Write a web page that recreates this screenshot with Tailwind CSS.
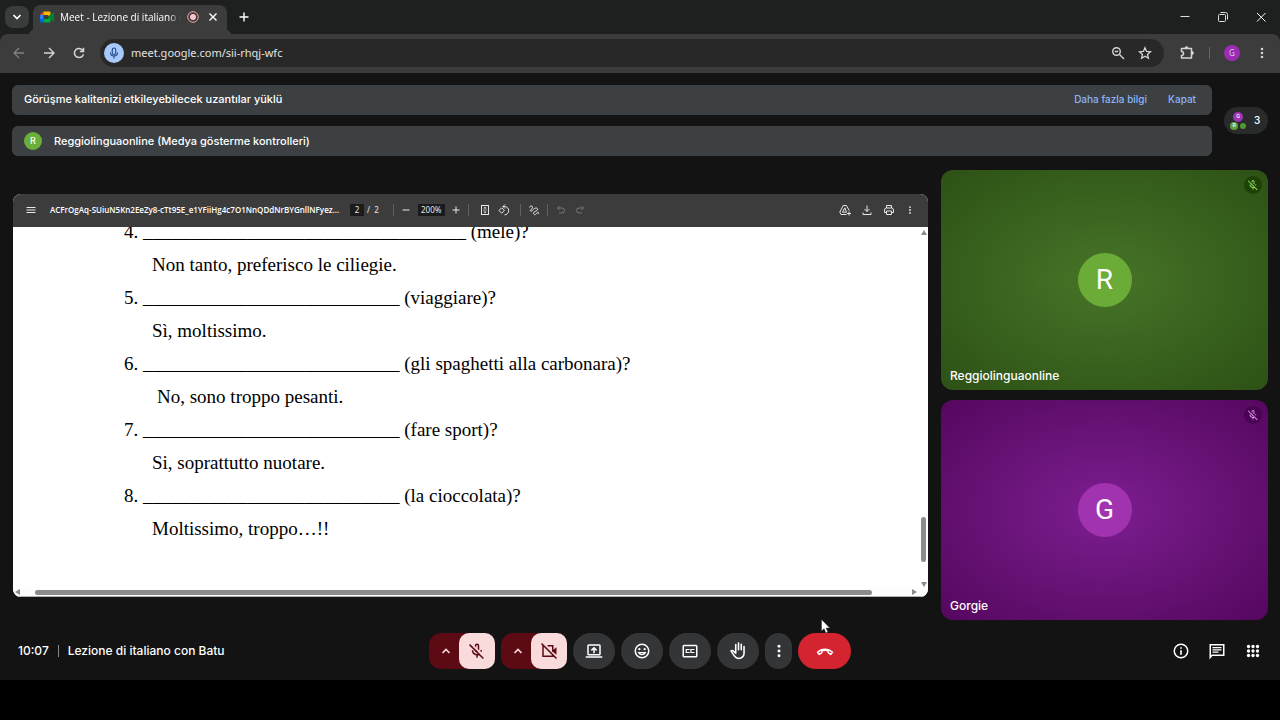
<!DOCTYPE html>
<html lang="tr">

<head>
    <meta charset="UTF-8">
    <meta name="viewport" content="width=device-width, initial-scale=1.0">
    <title>Meet - Lezione di italiano con Batu</title>
    <script src="https://cdn.jsdelivr.net/npm/@tailwindcss/browser@4"></script>
</head>

<body class="flex min-h-screen flex-col bg-black pb-10 font-['Inter',sans-serif] text-white">
    <!-- Shared icons -->
    <svg class="hidden" aria-hidden="true">
        <symbol id="mic-off" viewBox="0 0 24 24">
            <path d="M17.7 13.5 16.3 12c.2-.4.3-.9.4-1.5h1.9c-.1 1.1-.4 2.1-.9 3zM14.6 11 9 5.3V5a3 3 0 0 1 6 0v5.2zM11 5v2.2l2 2V5a1 1 0 0 0-2 0zm0 16v-3.1a7 7 0 0 1-6-6.9h2a5 5 0 0 0 8 4l1.4 1.4a7 7 0 0 1-3.4 1.5V21zm8.8 1.6L1.4 4.2l1.4-1.4 18.4 18.4zM9 8.5l4.8 4.9A3 3 0 0 1 9 11z" />
        </symbol>
        <symbol id="dots" viewBox="0 0 24 24">
            <circle cx="12" cy="5" r="2.2" />
            <circle cx="12" cy="12" r="2.2" />
            <circle cx="12" cy="19" r="2.2" />
        </symbol>
        <symbol id="close" viewBox="0 0 12 12">
            <path d="m2.5 2.5 7 7m0-7-7 7" fill="none" stroke="currentColor" stroke-width="1.4" />
        </symbol>
        <symbol id="chevron-up" viewBox="0 0 12 12">
            <path d="M2.5 8 6 4.5 9.5 8" fill="none" stroke="currentColor" stroke-width="1.7" />
        </symbol>
    </svg>

    <!-- Browser window -->
    <header class="bg-[#1e201f] font-['Noto_Sans',sans-serif]">
        <div class="flex h-[34px] items-center">
            <button class="ml-[5px] grid h-[22px] w-6 place-items-center rounded-lg bg-[#3a3b3b]" aria-label="Sekmelerde ara">
                <svg class="size-3 rotate-180"><use href="#chevron-up" /></svg>
            </button>
            <div class="relative ml-1 flex h-[29px] w-[194px] items-center self-end rounded-t-lg bg-[#3c3c3c] pb-1.5 pl-[7px] before:absolute before:bottom-0 before:-left-2 before:size-2 before:rounded-br-lg before:shadow-[4px_4px_0_0_#3c3c3c] after:absolute after:-right-2 after:bottom-0 after:size-2 after:rounded-bl-lg after:shadow-[-4px_4px_0_0_#3c3c3c]">
                <svg class="h-3 w-3.5" viewBox="0 0 28 24">
                    <path d="M7 1v7H0z" fill="#ea4335" />
                    <path d="M0 8h7v8H0z" fill="#2684fc" />
                    <path d="M0 16h7v7H2q-2 0-2-2z" fill="#0066da" />
                    <path d="M7 1h12q2 0 2 2v9l-6-4H7z" fill="#ffba00" />
                    <path d="M7 16h8l6-4v9q0 2-2 2H7z" fill="#00ac47" />
                    <path d="m15 12 11-9q2-1 2 1v16q0 2-2 1z" fill="#00832d" />
                </svg>
                <span class="ml-1.5 w-[121px] overflow-hidden mask-r-from-90% font-['Open_Sans',sans-serif] text-[10px] leading-4 whitespace-nowrap">Meet - Lezione di italiano con Batu</span>
                <svg class="ml-1.5 size-3 text-[#f2a3a8]" viewBox="0 0 12 12" fill="none" stroke="currentColor">
                    <circle cx="6" cy="6" r="5.3" />
                    <circle cx="6" cy="6" r="3" fill="#f9c6c9" stroke="none" />
                </svg>
                <button class="ml-2 text-white" aria-label="Sekmeyi kapat"><svg class="size-3"><use href="#close" /></svg></button>
            </div>
            <button class="ml-[11px]" aria-label="Yeni sekme">
                <svg class="size-3" viewBox="0 0 12 12" stroke="white" stroke-width="1.4"><path d="M6 1.5v9M1.5 6h9" /></svg>
            </button>
            <div class="ml-auto flex items-center gap-[26px] pr-[13px]">
                <button aria-label="Simge durumuna küçült">
                    <svg class="size-3" viewBox="0 0 12 12" stroke="#ddd"><path d="M1.5 5.5h9" /></svg>
                </button>
                <button aria-label="Önceki boyut">
                    <svg class="size-3" viewBox="0 0 12 12" fill="none" stroke="#ddd">
                        <rect x="1.5" y="3.5" width="7" height="7" rx="1" />
                        <path d="M3.5 1.5h5a2 2 0 0 1 2 2v5" />
                    </svg>
                </button>
                <button aria-label="Kapat"><svg class="size-3" viewBox="0 0 12 12" stroke="white"><path d="m2 2 8.500 8.500M10.500 2 2 10.500" /></svg></button>
            </div>
        </div>

        <div class="flex h-[39px] items-center rounded-t-lg bg-[#3c3c3c] pr-[11px] pb-px pl-3 text-[#d5d5d5]">
            <button class="text-[#818181]" aria-label="Geri">
                <svg class="size-3.5" viewBox="0 0 14 14" fill="none" stroke="currentColor" stroke-width="1.3"><path d="M12 7H2m5-5L2 7l5 5" /></svg>
            </button>
            <button class="ml-4" aria-label="İleri">
                <svg class="size-3.5" viewBox="0 0 14 14" fill="none" stroke="currentColor" stroke-width="1.4"><path d="M2 7h10M7 2l5 5-5 5" /></svg>
            </button>
            <button class="ml-4" aria-label="Yenile">
                <svg class="size-3.5" viewBox="0 0 24 24" fill="currentColor"><path d="M12 21a9 9 0 1 1 6.300-15.400V3H21v7.500h-7.500V8h3.600A6.500 6.500 0 1 0 18.200 14h2.600A9 9 0 0 1 12 21z" /></svg>
            </button>
            <form class="ml-3.5 flex h-7 flex-1 items-center rounded-full bg-[#282828] pr-3 pl-1">
                <button type="button" class="grid size-5 place-items-center rounded-full bg-[#a8c7fa] text-[#1d4a86]" aria-label="Mikrofon kullanılıyor">
                    <svg class="size-3" viewBox="0 0 24 24" fill="none" stroke="currentColor" stroke-width="2.2">
                        <rect x="8.5" y="2" width="7" height="13" rx="3.5" />
                        <path d="M5 11a7 7 0 0 0 14 0M12 18v5" />
                    </svg>
                </button>
                <input type="text" value="meet.google.com/sii-rhqj-wfc" aria-label="Adres çubuğu" class="ml-[7px] min-w-0 flex-1 bg-transparent text-[11px] text-[#e3e3e3] outline-none">
                <button type="button" aria-label="Yakınlaştır">
                    <svg class="size-3.5" viewBox="0 0 14 14" fill="none" stroke="currentColor" stroke-width="1.4">
                        <circle cx="5.5" cy="5.5" r="3.8" />
                        <path d="m8.500 8.500 4.500 4.500M3.800 5.500h3.400" />
                    </svg>
                </button>
                <button type="button" class="ml-[13px]" aria-label="Yer işareti ekle">
                    <svg class="size-3.5" viewBox="0 0 24 24" fill="none" stroke="currentColor" stroke-width="2.2"><path d="m12 3 2.700 6.300 6.800.6-5.200 4.500 1.600 6.600-5.900-3.500L6.100 21l1.600-6.600-5.200-4.500 6.800-.6z" /></svg>
                </button>
            </form>
            <button class="ml-[15px]" aria-label="Uzantılar">
                <svg class="size-4" viewBox="0 0 16 16" fill="none" stroke="currentColor" stroke-width="1.5">
                    <path d="M2.500 3.500h10v9.500h-10v-2.500a2 2 0 0 0 0-4z" stroke-linejoin="round" />
                    <path d="M6 3a1.500 1.500 0 0 1 3 0zM13 6.500a1.500 1.500 0 0 1 0 3z" fill="currentColor" stroke-width=".7" />
                </svg>
            </button>
            <span class="mx-3.5 h-3 w-px bg-[#666]"></span>
            <button class="grid size-4 place-items-center rounded-full bg-[#9c2bb5] text-[8px]" aria-label="Profil">G</button>
            <button class="ml-[15px]" aria-label="Menü"><svg class="size-3.5 fill-current"><use href="#dots" /></svg></button>
        </div>
    </header>

    <main class="flex flex-1 flex-col bg-[#131313]">
        <!-- Notices -->
        <section class="flex items-center gap-3 px-3 pt-3 text-[11px] font-medium">
            <div class="flex flex-1 flex-col gap-[11px]">
                <div class="flex h-[30px] items-center rounded-md bg-[#3c4043] px-3 pb-px">
                    <p>Görüşme kalitenizi etkileyebilecek uzantılar yüklü</p>
                    <a href="#" class="ml-auto text-[10px] text-[#8ab4f8]">Daha fazla bilgi</a>
                    <button class="mr-1 ml-[21px] text-[10px] text-[#8ab4f8]">Kapat</button>
                </div>
                <div class="flex h-[30px] items-center rounded-md bg-[#3c4043] px-3">
                    <span class="grid size-[18px] place-items-center rounded-full bg-[#6aaf38] text-[9px]">R</span>
                    <p class="ml-3">Reggiolinguaonline (Medya gösterme kontrolleri)</p>
                </div>
            </div>
            <button class="flex h-[27px] w-11 items-center rounded-full bg-[#282a2c] pl-[5px]" aria-label="3 katılımcı">
                <span class="flex w-[18px] flex-wrap justify-center gap-x-0.5 text-[5px] leading-none">
                    <span class="mx-1 grid size-2.5 place-items-center rounded-full bg-[#a033b8]">G</span>
                    <span class="grid size-2 place-items-center rounded-full bg-[#5fa03a]">R</span>
                    <span class="mt-px grid size-1.5 place-items-center rounded-full bg-[#4f9a30]"></span>
                </span>
                <span class="ml-[7px] text-[10px]">3</span>
            </button>
        </section>

        <!-- Shared screen and participants -->
        <section class="flex flex-1 items-center gap-[13px] pt-3.5 pr-3 pl-[13px]">
            <article class="flex aspect-[915/403] min-w-0 flex-1 flex-col overflow-hidden rounded-lg bg-white">
                <div class="flex h-[33px] shrink-0 items-center bg-[#3c3c3c] px-[13px] font-['Noto_Sans',sans-serif] text-[8px] text-[#e8e8e8]">
                    <button aria-label="Kenar çubuğu">
                        <svg class="size-2.5" viewBox="0 0 10 10" stroke="currentColor"><path d="M.5 2.500h9M.5 5h9M.5 7.500h9" /></svg>
                    </button>
                    <h1 class="ml-3.5 w-[287px] font-['Open_Sans',sans-serif] font-semibold whitespace-nowrap text-white">ACFrOgAq-SUiuN5Kn2EeZy8-cTt95E_e1YFiiHg4c7O1NnQDdNrBYGnllNFyez...</h1>
                    <input type="text" value="2" aria-label="Sayfa" class="ml-[13px] h-3 w-3.5 bg-[#191b1c] text-center">
                    <span class="ml-[3px]">/&nbsp; 2</span>
                    <span class="ml-3.5 h-3 w-px bg-[#606060]"></span>
                    <button class="ml-[7px]" aria-label="Uzaklaştır">
                        <svg class="size-2.5" viewBox="0 0 10 10" stroke="currentColor"><path d="M1.500 5h7" /></svg>
                    </button>
                    <input type="text" value="200%" aria-label="Yakınlaştırma düzeyi" class="ml-[7px] h-3 w-[27px] bg-[#191b1c] text-center">
                    <button class="ml-1.5" aria-label="Yakınlaştır">
                        <svg class="size-2.5" viewBox="0 0 10 10" stroke="currentColor"><path d="M1.500 5h7M5 1.500v7" /></svg>
                    </button>
                    <span class="ml-[7px] h-3 w-px bg-[#606060]"></span>
                    <button class="ml-2.5" aria-label="Sayfaya sığdır">
                        <svg class="size-3" viewBox="0 0 12 12" fill="none" stroke="currentColor">
                            <rect x="2.5" y="1.5" width="7" height="9" />
                            <path d="M4 6h4" stroke-width=".6" />
                            <path d="m6 2.500 1.500 2h-3zM6 9.500l1.500-2h-3z" fill="currentColor" stroke="none" />
                        </svg>
                    </button>
                    <button class="ml-[7px]" aria-label="Döndür">
                        <svg class="size-3" viewBox="0 0 12 12" fill="none" stroke="currentColor">
                            <path d="M1 6.500 3.700 3.800l2.700 2.700-2.700 2.700zM5 2.500h1.500a4.200 4.200 0 1 1 0 8.400M7 .5l-2 2 2 2" />
                        </svg>
                    </button>
                    <span class="ml-2.5 h-3 w-px bg-[#606060]"></span>
                    <button class="ml-[7px]" aria-label="Çiz">
                        <svg class="size-3" viewBox="0 0 12 12" fill="none" stroke="currentColor">
                            <path d="M1.500 3.500c.5-2 3.500-2 3 0S1.500 6 2.500 7s2.300-1.500 4-2.500 3.500-.5 3 1.200S5 7.500 5.500 9.500s3 1 3.500-.5 2-.5 1.500 1" />
                        </svg>
                    </button>
                    <span class="ml-[7px] h-3 w-px bg-[#606060]"></span>
                    <button class="ml-[7px] text-[#777]" aria-label="Geri al" disabled>
                        <svg class="size-3" viewBox="0 0 12 12" fill="none" stroke="currentColor"><path d="M4.500 2 2.500 4l2 2M2.500 4H7a2.500 2.500 0 0 1 0 5H4" /></svg>
                    </button>
                    <button class="ml-[7px] text-[#777]" aria-label="Yinele" disabled>
                        <svg class="size-3" viewBox="0 0 12 12" fill="none" stroke="currentColor"><path d="m7.500 2 2 2-2 2m2-2H5a2.500 2.500 0 0 0 0 5h3" /></svg>
                    </button>
                    <div class="ml-auto flex items-center gap-2.5">
                        <button aria-label="Drive'a kaydet">
                            <svg class="size-3" viewBox="0 0 12 12" fill="none" stroke="currentColor">
                                <path d="M7.500 10.500H2L.8 8.200 4.200 1.500h3.200l2.800 5M5.800 3.800 3.500 8.200h4zM10 7.500v4M8 9.500h4" />
                            </svg>
                        </button>
                        <button aria-label="İndir">
                            <svg class="size-3" viewBox="0 0 12 12" fill="none" stroke="currentColor"><path d="M6 1.500v6M3.500 5 6 7.500 8.500 5M2 8.500v2h8v-2" /></svg>
                        </button>
                        <button aria-label="Yazdır">
                            <svg class="size-3" viewBox="0 0 12 12" fill="none" stroke="currentColor">
                                <path d="M3.500 4V1.500h5V4M3.500 8.500h-2V6q0-2 2-2h5q2 0 2 2v2.500h-2M3.500 7h5v3.500h-5z" />
                            </svg>
                        </button>
                        <button aria-label="Diğer"><svg class="size-2.5 fill-current"><use href="#dots" /></svg></button>
                    </div>
                </div>

                <div class="flex min-h-0 flex-1">
                    <div class="flex-1 overflow-hidden font-['Liberation_Serif',serif] text-[19px] leading-[33px] whitespace-nowrap text-black">
                        <div class="-mt-3 pl-[111px]">
                            <p>4. __________________________________ (mele)?</p>
                            <p class="pl-7">Non tanto, preferisco le ciliegie.</p>
                            <p>5. ___________________________ (viaggiare)?</p>
                            <p class="pl-7">Sì, moltissimo.</p>
                            <p>6. ___________________________ (gli spaghetti alla carbonara)?</p>
                            <p class="pl-[33px]">No, sono troppo pesanti.</p>
                            <p>7. ___________________________ (fare sport)?</p>
                            <p class="pl-7">Si, soprattutto nuotare.</p>
                            <p>8. ___________________________ (la cioccolata)?</p>
                            <p class="pl-7">Moltissimo, troppo…!!</p>
                        </div>
                    </div>
                    <!-- Vertical scrollbar -->
                    <div class="flex w-[9px] flex-col items-center pt-[3px] pb-0.5">
                        <svg class="h-[5px] w-1.5 fill-[#8b8b8b]" viewBox="0 0 6 5"><path d="m3 0 3 5H0z" /></svg>
                        <span class="mt-auto h-[45px] w-[5px] rounded-full bg-[#8b8b8b]"></span>
                        <svg class="mt-5 h-[5px] w-1.5 fill-[#8b8b8b]" viewBox="0 0 6 5"><path d="m3 5 3-5H0z" /></svg>
                    </div>
                </div>
                <!-- Horizontal scrollbar -->
                <div class="flex h-2 shrink-0 items-center border-b border-[#b0b0b0] bg-[#fcfcfc] pr-[11px] pl-0.5">
                    <svg class="h-1.5 w-[5px] fill-[#8b8b8b]" viewBox="0 0 5 6"><path d="m0 3 5-3v6z" /></svg>
                    <span class="mr-10 ml-[15px] h-[5px] flex-1 rounded-full bg-[#8b8b8b]"></span>
                    <svg class="h-1.5 w-[5px] fill-[#8b8b8b]" viewBox="0 0 5 6"><path d="M5 3 0 0v6z" /></svg>
                </div>
            </article>

            <aside class="flex w-[327px] shrink-0 flex-col gap-2.5 self-stretch text-xs font-medium">
                <figure class="relative grid min-h-40 flex-1 place-items-center rounded-xl bg-radial from-[#477528] to-[#2d5115]">
                    <span class="grid size-[54px] place-items-center rounded-full bg-[#6bab37] font-['Roboto',sans-serif] text-[28px] font-normal">R</span>
                    <span class="absolute top-1.5 right-1.5 grid size-[18px] place-items-center rounded-full bg-[#1e4108] text-[#8fd95c]">
                        <svg class="size-3 fill-current"><use href="#mic-off" /></svg>
                    </span>
                    <figcaption class="absolute bottom-1.5 left-[9px]">Reggiolinguaonline</figcaption>
                </figure>
                <figure class="relative grid min-h-40 flex-1 place-items-center rounded-xl bg-radial from-[#7c1e90] to-[#55075f]">
                    <span class="grid size-[54px] place-items-center rounded-full bg-[#a233b0] font-['Roboto',sans-serif] text-[28px] font-normal">G</span>
                    <span class="absolute top-1.5 right-1.5 grid size-[18px] place-items-center rounded-full bg-[#490453] text-[#dd8cec]">
                        <svg class="size-3 fill-current"><use href="#mic-off" /></svg>
                    </span>
                    <figcaption class="absolute bottom-1.5 left-[9px]">Gorgie</figcaption>
                </figure>
            </aside>
        </section>

        <!-- Call controls -->
        <footer class="grid h-[60px] grid-cols-[1fr_auto_1fr] items-center px-[18px] pt-px">
            <div class="flex items-center text-xs font-medium">
                <time>10:07</time>
                <span class="mx-[9px] h-3 w-px bg-[#888]"></span>
                <span>Lezione di italiano con Batu</span>
            </div>

            <div class="flex h-9 items-stretch gap-1.5">
                <div class="flex w-[66px] rounded-xl bg-[#5c0b14]">
                    <button class="grid w-[30px] place-items-center pl-1 text-[#f9d5d7]" aria-label="Ses ayarları"><svg class="size-3"><use href="#chevron-up" /></svg></button>
                    <button class="grid flex-1 place-items-center rounded-[10px] bg-[#fadbdc] text-[#5c0b14]" aria-label="Mikrofonu aç"><svg class="size-[18px] fill-current"><use href="#mic-off" /></svg></button>
                </div>
                <div class="flex w-[66px] rounded-xl bg-[#5c0b14]">
                    <button class="grid w-[30px] place-items-center pl-1 text-[#f9d5d7]" aria-label="Video ayarları"><svg class="size-3"><use href="#chevron-up" /></svg></button>
                    <button class="grid flex-1 place-items-center rounded-[10px] bg-[#fadbdc] text-[#5c0b14]" aria-label="Kamerayı aç">
                        <svg class="size-[18px]" viewBox="0 0 24 24" fill="none" stroke="currentColor" stroke-width="2">
                            <path d="M10 5h7v8M4.500 5H4v14h13v-2M2 2l20 20" />
                            <path d="m17 11 5-4v10l-5-4z" fill="currentColor" stroke="none" />
                        </svg>
                    </button>
                </div>
                <button class="grid w-[42px] place-items-center rounded-full bg-[#333537]" aria-label="Ekranı sun">
                    <svg class="size-[18px]" viewBox="0 0 24 24" fill="none" stroke="currentColor" stroke-width="2">
                        <rect x="4" y="4" width="16" height="13" rx="1" />
                        <path d="M1 20h22M12 15V8m-3.500 3.200L12 7.700l3.500 3.500" />
                    </svg>
                </button>
                <button class="grid w-[42px] place-items-center rounded-full bg-[#333537]" aria-label="İfade gönder">
                    <svg class="size-[18px]" viewBox="0 0 24 24" fill="none" stroke="currentColor" stroke-width="2">
                        <circle cx="12" cy="12" r="9" />
                        <path d="M7.500 14.200c2 3.400 7 3.400 9 0z" stroke-width="1.5" />
                        <circle cx="8.5" cy="9.5" r="1.5" fill="currentColor" stroke="none" />
                        <circle cx="15.5" cy="9.5" r="1.5" fill="currentColor" stroke="none" />
                    </svg>
                </button>
                <button class="grid w-[42px] place-items-center rounded-full bg-[#333537]" aria-label="Altyazılar">
                    <svg class="size-[18px]" viewBox="0 0 24 24" fill="none" stroke="currentColor" stroke-width="2">
                        <rect x="3" y="4.5" width="18" height="15" rx="1" />
                        <path d="M10.800 10.800V10H7v4h3.800v-.8M17 10.800V10h-3.800v4H17v-.8" stroke-width="1.6" />
                    </svg>
                </button>
                <button class="grid w-[42px] place-items-center rounded-full bg-[#333537]" aria-label="El kaldır">
                    <svg class="size-[19px]" viewBox="0 0 24 24" fill="none" stroke="currentColor" stroke-width="2" stroke-linejoin="round" stroke-linecap="round">
                        <path d="M8.500 12V4.500M12 11V2.500M15.500 11V4M19 12V7M19 7v8.500A6.500 6.500 0 0 1 12.500 22c-2.800 0-4.600-1.300-6-3.500L2.500 12.500c1.500-1 2.700-.4 3.500.5l2.500 2.500V12" />
                    </svg>
                </button>
                <button class="grid w-[27px] place-items-center rounded-full bg-[#333537]" aria-label="Diğer seçenekler"><svg class="size-4 fill-current"><use href="#dots" /></svg></button>
                <div class="relative flex">
                    <button class="grid w-[53px] place-items-center rounded-full bg-[#d3242f]" aria-label="Görüşmeden ayrıl">
                        <svg class="size-[18px]" viewBox="0 0 24 24" fill="none" stroke="currentColor" stroke-width="2" stroke-linejoin="round">
                            <path d="M2 13.800c5.500-5.700 14.500-5.700 20 0l-2.500 2.700-3.300-2.200v-2.600c-2.800-1-5.600-1-8.400 0v2.600l-3.300 2.200z" />
                        </svg>
                    </button>
                    <!-- Mouse pointer -->
                    <svg class="absolute -top-3.5 left-[23px] h-[15px] w-2.5" viewBox="0 0 10 15">
                        <path d="M.5.500v11.500l2.600-2.300 1.800 4.300 2-.9-1.800-4.100h3.800z" fill="white" stroke="#333" stroke-width=".5" />
                    </svg>
                </div>
            </div>

            <div class="flex items-center justify-end gap-[18px]">
                <button aria-label="Toplantı ayrıntıları">
                    <svg class="size-[18px]" viewBox="0 0 24 24" fill="none" stroke="currentColor" stroke-width="2">
                        <circle cx="12" cy="12" r="9" />
                        <path d="M12 11v6M12 7v2" stroke-width="2.2" />
                    </svg>
                </button>
                <button aria-label="Sohbet">
                    <svg class="size-[18px]" viewBox="0 0 24 24" fill="none" stroke="currentColor" stroke-width="2">
                        <path d="M3 20.500V3.500h18v14H5.500z" />
                        <path d="M6 7.500h12M6 10.500h12M6 13.500h8" stroke-width="1.8" />
                    </svg>
                </button>
                <button aria-label="Etkinlikler">
                    <svg class="size-[18px]" viewBox="0 0 24 24" fill="currentColor">
                        <circle cx="6" cy="6" r="2.2" /><circle cx="12" cy="6" r="2.2" /><circle cx="18" cy="6" r="2.2" />
                        <circle cx="6" cy="12" r="2.2" /><circle cx="12" cy="12" r="2.2" /><circle cx="18" cy="12" r="2.2" />
                        <circle cx="6" cy="18" r="2.2" /><circle cx="12" cy="18" r="2.2" /><circle cx="18" cy="18" r="2.2" />
                    </svg>
                </button>
            </div>
        </footer>
    </main>
</body>

</html>
